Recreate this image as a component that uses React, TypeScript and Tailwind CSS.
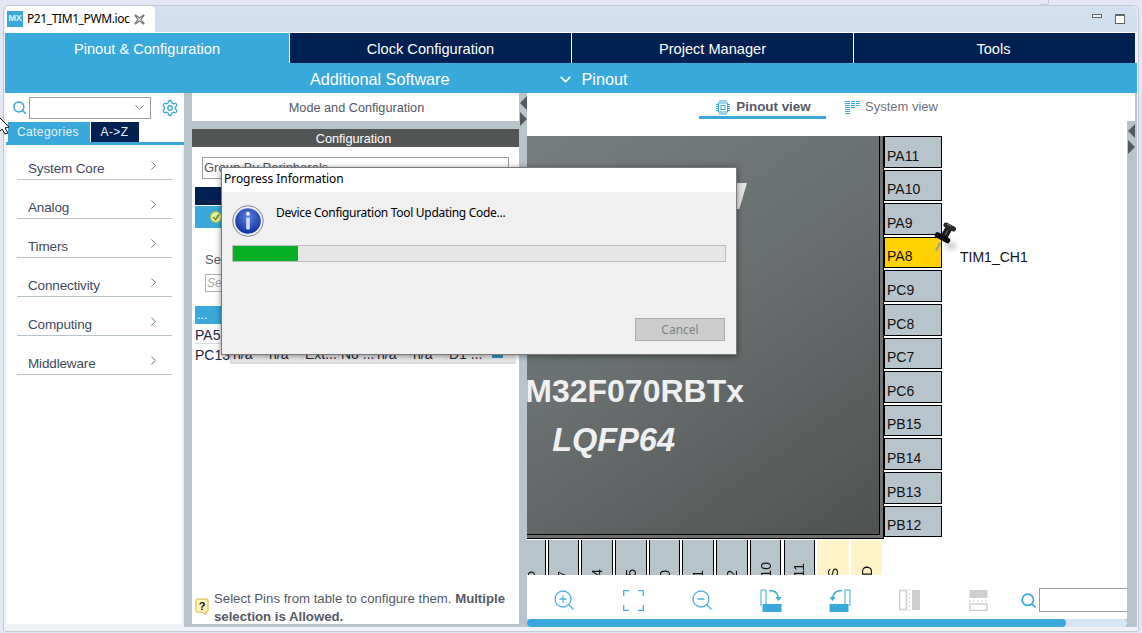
import React from "react";
import { ChevronDown, ChevronRight, Search, Settings, ZoomIn, ZoomOut } from "lucide-react";

const categories = ["System Core", "Analog", "Timers", "Connectivity", "Computing", "Middleware"];
const rightPins = ["PA11", "PA10", "PA9", "PA8", "PC9", "PC8", "PC7", "PC6", "PB15", "PB14", "PB13", "PB12"];
const bottomPins = ["PA6", "PA7", "PC4", "PC5", "PB0", "PB1", "PB2", "PB10", "PB11", "VSS", "VDD"];
const cells = ["n/a", "n/a", "Ext...", "No ...", "n/a", "n/a", "D1 ..."];

function PinIcon() {
  return (
    <svg width="34" height="40" viewBox="0 0 34 40" className="absolute left-[930px] top-[218px]">
      <defs>
        <filter id="pb" x="-80%" y="-80%" width="260%" height="260%"><feGaussianBlur stdDeviation="2.5" /></filter>
        <filter id="pb2" x="-30%" y="-30%" width="160%" height="160%"><feGaussianBlur stdDeviation="0.6" /></filter>
      </defs>
      <ellipse cx="21" cy="28" rx="6" ry="4" fill="#aaa" opacity="0.55" filter="url(#pb)" />
      <path d="M10 25 L6 33" stroke="#a5a58c" strokeWidth="2.500" />
      <g filter="url(#pb2)" fill="none" strokeLinecap="round">
        <path d="M19 10 L14 19" stroke="#1c1c1c" strokeWidth="7" />
        <path d="M16 7 L23.500 11" stroke="#2a2a2a" strokeWidth="5" />
        <path d="M7.500 17 L17.500 22.500" stroke="#111" strokeWidth="5.500" />
      </g>
      <path d="M17 6 L21 8" stroke="#8a8a8a" strokeWidth="1" />
      <path d="M18 12 L15 17" stroke="#666" strokeWidth="1.200" />
    </svg>
  );
}

function Cursor() {
  return (
    <svg width="10" height="18" viewBox="0 0 10 18" className="absolute left-0 top-[117px]">
      <path d="M-1 0 L9 10 L5 11 L8 16 L5 17 L2 12 L-1 15 Z" fill="#fff" stroke="#111" strokeWidth="1" />
    </svg>
  );
}

function InfoIcon() {
  return (
    <svg width="32" height="32" viewBox="0 0 32 32" className="shrink-0">
      <defs>
        <radialGradient id="ig" cx="50%" cy="35%" r="65%">
          <stop offset="0" stopColor="#5b82e0" />
          <stop offset="1" stopColor="#10309c" />
        </radialGradient>
      </defs>
      <circle cx="16" cy="16" r="15.3" fill="#eef0f6" stroke="#7c8494" strokeWidth="1" />
      <circle cx="16" cy="16" r="12.8" fill="url(#ig)" />
      <circle cx="16" cy="8.8" r="2" fill="#f2f4fa" />
      <rect x="14.2" y="12.5" width="3.6" height="12" rx="1.2" fill="#d9dee8" />
    </svg>
  );
}

function ChipIcon() {
  return (
    <svg width="14" height="15" viewBox="0 0 14 15" fill="none" stroke="#39a9dc" strokeWidth="1">
      <rect x="2.5" y="3" width="9" height="9" />
      <rect x="5" y="5.5" width="4" height="4" />
      <path d="M4 0v2M6 0v2M8 0v2M10 0v2M4 13v2M6 13v2M8 13v2M10 13v2M0 4.500h2M0 6.500h2M0 8.500h2M0 10.500h2M12 4.500h2M12 6.500h2M12 8.500h2M12 10.500h2" />
    </svg>
  );
}

function SystemIcon() {
  return (
    <svg width="15" height="14" viewBox="0 0 15 14" fill="none" stroke="#39a9dc" strokeWidth="1">
      <path d="M0 1.500h5M6 1.500h4M11 1.500h4M0 3.500h5M6 3.500h4M11 3.500h4M0 5.500h5M6 5.500h4M11 5.500h4M0 7.500h5M6 7.500h4M0 9.500h5M0 11.500h5M0 13.500h5" />
    </svg>
  );
}

function FrameIcon() {
  return (
    <svg width="21" height="21" viewBox="0 0 21 21" fill="none" stroke="#4bb0e0" strokeWidth="1.300">
      <path d="M0.700 6V0.700H6M15 0.700H20.300V6M20.300 15V20.300H15M6 20.300H0.700V15" />
    </svg>
  );
}

function RotateRight() {
  return (
    <svg width="22" height="23" viewBox="0 0 22 23" fill="none" stroke="#39a9dc" strokeWidth="1">
      <path d="M1 17V1H6V15" />
      <rect x="2.500" y="15" width="19" height="8" fill="#39a9dc" stroke="none" />
      <path d="M9 1.500 C14 1.500 18 4 18.500 9" strokeWidth="1.400" />
      <path d="M15.500 8 L21.500 8 L18.500 12 Z" fill="#39a9dc" stroke="none" />
    </svg>
  );
}

function RotateLeft() {
  return (
    <svg width="22" height="23" viewBox="0 0 22 23" fill="none" stroke="#39a9dc" strokeWidth="1">
      <path d="M21 17V1H16V15" />
      <rect x="0.500" y="15" width="19" height="8" fill="#39a9dc" stroke="none" />
      <path d="M13 1.500 C8 1.500 4 4 3.500 9" strokeWidth="1.400" />
      <path d="M0.500 8 L6.500 8 L3.500 12 Z" fill="#39a9dc" stroke="none" />
    </svg>
  );
}

function MirrorV() {
  return (
    <svg width="21" height="22" viewBox="0 0 21 22" fill="none" stroke="#cfcfcf">
      <rect x="0.500" y="1.500" width="7" height="19" strokeWidth="1.500" />
      <rect x="13" y="1" width="8" height="20" fill="#cfcfcf" stroke="none" />
      <path d="M10.500 0V22" strokeDasharray="2 2" strokeWidth="1" />
    </svg>
  );
}

function MirrorH() {
  return (
    <svg width="19" height="21" viewBox="0 0 19 21" fill="none" stroke="#cfcfcf">
      <rect x="0.500" y="0" width="18" height="8" fill="#cfcfcf" stroke="none" />
      <path d="M0 11H19" strokeDasharray="2 2" strokeWidth="1" />
      <rect x="1" y="14" width="17" height="6.500" strokeWidth="1.500" />
    </svg>
  );
}

function HelpIcon() {
  return (
    <svg width="14" height="18" viewBox="0 0 14 18" className="shrink-0">
      <path d="M2 1H12Q13 1 13 2V13Q13 14 12 14H11L10.500 17L7.500 14H2Q1 14 1 13V2Q1 1 2 1Z" fill="#fff3b0" stroke="#d9b44a" strokeWidth="1" />
      <text x="7" y="11.500" textAnchor="middle" fontSize="11" fontWeight="700" fill="#111" fontFamily="Liberation Sans">?</text>
    </svg>
  );
}

function Triangles() {
  return (
    <div className="flex flex-col items-center gap-[2px]">
      <div className="h-0 w-0 border-y-[7px] border-r-[7px] border-y-transparent border-r-[#54595c]" />
      <div className="h-0 w-0 border-y-[7px] border-l-[7px] border-y-transparent border-l-[#54595c]" />
    </div>
  );
}

export default function App() {
  return (
    <div className="relative h-[633px] w-[1142px] overflow-hidden bg-[#e3e7f5] pt-[5px] font-['Liberation_Sans',Arial,sans-serif] text-[14px]">
      <div className="absolute left-[1040px] top-0 h-[5px] w-[9px] rounded-br-[3px] border-b border-r border-[#c6cad4]" />
      <div className="ml-[3px] h-[627px] w-[1136px] rounded-t-[6px] rounded-b-[3px] border border-[#c5c9d2] bg-[#f0f1f6] px-px">
        {/* editor tab strip */}
        <div className="flex h-[26px] bg-[linear-gradient(#d2e0ef,#cfdeec)] rounded-tr-[6px]">
          <div className="flex h-full w-[150px] items-center rounded-t-[5px] bg-white pl-[2px] font-['Noto_Sans',sans-serif] text-[12px] text-black">
            <div className="flex h-[16px] w-[16px] items-center justify-center bg-[#39a9dc] font-['Liberation_Sans',sans-serif] text-[9px] font-bold tracking-[-0.3px] text-[#dff1fb]">MX</div>
            <span className="ml-[4px] tracking-[-0.4px]">P21_TIM1_PWM.ioc</span>
            <svg width="11" height="11" viewBox="0 0 11 11" className="ml-[5px]" fill="none" stroke="#777" strokeWidth="1.200"><path d="M1.500 1 L5.500 4 L9.500 1 L10 1.500 L7 5.500 L10 9.500 L9.500 10 L5.500 7 L1.500 10 L1 9.500 L4 5.500 L1 1.500 Z" /></svg>
          </div>
          <div className="flex flex-1 items-center justify-end pr-[12px]">
            <div className="mb-[6px] h-[4px] w-[10px] border border-[#666] bg-[#eef2f8]" />
            <div className="ml-[13px] h-[10px] w-[10px] border border-[#666] border-t-2 bg-white" />
          </div>
        </div>
        <div className="h-px bg-white" />
        {/* perspective navigation */}
        <div className="flex h-[30px] text-[14.6px] text-white">
          <div className="flex w-[285px] items-center justify-center border-r border-white bg-[#39a9dc] pt-[3px]">Pinout &amp; Configuration</div>
          <div className="flex w-[282px] items-center justify-center border-r border-white bg-[#002052] pt-[3px]">Clock Configuration</div>
          <div className="flex w-[282px] items-center justify-center border-r border-white bg-[#002052] pt-[3px]">Project Manager</div>
          <div className="flex w-[281px] items-center justify-center bg-[#002052] pr-[2px] pt-[3px]">Tools</div>
        </div>
        <div className="flex h-[30px] items-center bg-[#39a9dc] pt-[2px] text-[16.2px] text-white">
          <span className="ml-[305px]">Additional Software</span>
          <ChevronDown className="ml-[108px] h-[17px] w-[17px]" strokeWidth={2.200} />
          <span className="ml-[7px]">Pinout</span>
        </div>
        {/* body */}
        <div className="flex h-[534px] bg-[#b8c4cc]">
          {/* left column */}
          <div className="flex w-[179px] flex-col bg-[#eff1f5] pb-[3px]">
            <div className="flex h-[29px] items-center bg-white pl-[7px]">
              <Search className="h-[15px] w-[15px] text-[#39a9dc]" strokeWidth={2.400} />
              <div className="ml-[2px] flex h-[22px] w-[122px] items-center justify-end border border-[#9a9ea1] pr-[3px]">
                <ChevronDown className="h-[15px] w-[15px] text-[#777]" strokeWidth={1.500} />
              </div>
              <Settings className="ml-[10px] h-[18px] w-[18px] text-[#39a9dc]" strokeWidth={1.800} />
            </div>
            <div className="flex h-[20px] bg-white pl-[3px] text-[12px] tracking-[0.4px] text-[#e3f3fb]">
              <div className="flex w-[82px] items-center justify-center bg-[#39a9dc] pr-[2px]">Categories</div>
              <div className="ml-px flex w-[48px] items-center justify-center bg-[#002052] pr-[1px]">A-&gt;Z</div>
            </div>
            <div className="ml-px h-[3px] bg-[#39a9dc]" />
            <div className="mx-[2px] flex flex-1 flex-col gap-[15px] bg-white px-[10px] pt-[11px]">
              {categories.map((c) => (
                <div key={c} className="flex h-[24px] items-center justify-between border-b border-[#b8c4cc] pl-[11px] pr-[11px] text-[13.500px] text-[#3f4a5c]">
                  <span className="pt-[3px] tracking-[-0.15px]">{c}</span>
                  <ChevronRight className="mb-[4px] h-[15px] w-[15px] text-[#6b7075]" strokeWidth={1.500} />
                </div>
              ))}
            </div>
          </div>
          <div className="w-[8px]" />
          {/* middle column */}
          <div className="flex w-[327px] flex-col pb-[3px]">
            <div className="flex h-[28px] items-center justify-center bg-white pl-[2px] pt-[3px] text-[12.7px] text-[#555965]">Mode and Configuration</div>
            <div className="h-[8px]" />
            <div className="flex h-[18px] items-center justify-center bg-[#545655] pr-[4px] pt-[3px] text-[12.7px] text-white">Configuration</div>
            <div className="flex flex-1 flex-col bg-white">
              <div className="ml-[10px] mt-[10px] flex h-[22px] w-[307px] items-center border border-[#9a9ea1] pl-[1px] text-[13px] text-[#555]">Group By Peripherals</div>
              <div className="ml-[3px] mt-[8px] h-[18px] w-[321px] bg-[#002052]" />
              <div className="ml-[3px] mt-px flex h-[22px] w-[321px] items-center bg-[#39a9dc] pl-[15px]">
                <svg width="12" height="12" viewBox="0 0 12 12"><circle cx="6" cy="6" r="5.500" fill="#e8f2a0" stroke="#a4bd3a" /><path d="M3 6 L5.500 8.500 L9 3.500" stroke="#6f8f1b" strokeWidth="1.500" fill="none" /></svg>
              </div>
              <div className="ml-[13px] mt-[22px] text-[13px] text-[#555965]">Select Pins</div>
              <div className="ml-[13px] mt-[4px] flex h-[18px] w-[200px] items-center border border-[#b0b4b8] pl-px text-[12px] italic text-[#aaa]">Search</div>
              <div className="ml-[3px] mt-[14px] flex h-[18px] w-[321px] items-center bg-[#39a9dc] pl-[2px] text-[12px] text-white">...</div>
              <div className="ml-[3px] flex h-[20px] w-[321px] items-center border-b border-[#dcdcdc] pt-[4px] text-[14px] text-[#222a44]">PA5</div>
              <div className="ml-[3px] flex h-[20px] w-[321px] text-[14px] text-[#222a44]">
                <div className="flex w-[35px] items-center overflow-hidden whitespace-nowrap pt-[3px]">PC13</div>
                {cells.map((c, i) => (
                  <div key={i} className="flex w-[36px] items-center overflow-hidden border-b-2 border-l border-[#dcdcdc] bg-[linear-gradient(#fff,#e6e6e6)] pl-[2px] pt-[3px] whitespace-nowrap">{c}</div>
                ))}
                <div className="flex w-[34px] items-center justify-center border-b-2 border-l border-[#dcdcdc] bg-[linear-gradient(#fff,#e6e6e6)] pr-[4px]">
                  <div className="flex h-[11px] w-[11px] items-center justify-center bg-[#2f95c5]">
                    <svg width="9" height="9" viewBox="0 0 9 9" fill="none" stroke="#dff1fb" strokeWidth="1.300"><path d="M1.500 2.500 L4.500 6 L7.500 2.500" /></svg>
                  </div>
                </div>
              </div>
              <div className="flex-1" />
              <div className="-mb-[2px] flex pl-[3px] text-[13.2px] leading-[18px] text-[#555965]">
                <div className="pt-[8px]"><HelpIcon /></div>
                <div className="ml-[5px]">Select Pins from table to configure them. <b>Multiple selection is Allowed.</b></div>
              </div>
            </div>
          </div>
          <div className="flex w-[8px] justify-center pt-[3px]"><Triangles /></div>
          {/* right column */}
          <div className="flex w-[600px] flex-col">
            <div className="flex h-[43px] bg-white">
              <div className="ml-[172px] flex h-[26px] w-[127px] items-center justify-center gap-[6px] border-b-[3px] border-[#39a9dc] pl-[2px] pt-[6px] text-[13.4px] font-bold text-[#555965]">
                <ChipIcon /><span>Pinout view</span>
              </div>
              <div className="ml-[19px] flex h-[26px] items-center gap-[5px] pt-[2px] text-[13px] text-[#6f737c]">
                <SystemIcon /><span>System view</span>
              </div>
            </div>
            <div className="relative h-[439px] overflow-hidden bg-white">
              <div className="flex h-[403px]">
                <div className="h-[403px] w-[357px] border-b border-r border-black bg-[#6f7172] pb-[3px] pr-[3px]">
                  <div className="flex h-full flex-col items-end overflow-hidden border-b border-r border-black bg-[linear-gradient(145deg,#777d7f_0%,#6a6f70_45%,#4f5251_100%)] pt-[236px] font-bold text-[#eff0f1]">
                    <div className="mr-[135px] whitespace-nowrap text-[32px] leading-[38px]">STM32F070RBTx</div>
                    <div className="mr-[204px] mt-[12px] whitespace-nowrap text-[32.500px] italic leading-[36px]">LQFP64</div>
                  </div>
                </div>
                <div className="flex flex-col gap-[2px]">
                  {rightPins.map((p) => (
                    <div key={p} className="flex h-[31.6px] items-center">
                      <div className={`flex h-full w-[58px] items-end border border-black pb-[3px] pl-[2px] text-[14px] leading-[16px] text-[#111] ${p === "PA8" ? "bg-[#ffd200]" : "bg-[#b8c4cc]"}`}>{p}</div>
                      {p === "PA8" && <span className="ml-[18px] pt-[10px] text-[14px] text-[#111]">TIM1_CH1</span>}
                    </div>
                  ))}
                </div>
              </div>
              <div className="-ml-[13px] mt-px flex h-[36px] gap-[2.200px] overflow-hidden">
                {bottomPins.map((p) => {
                  const power = p === "VSS" || p === "VDD";
                  return (
                    <div key={p} className={`flex h-[62px] w-[31.500px] shrink-0 flex-col items-center justify-end pb-[6px] text-[14px] text-[#111] ${power ? "bg-[#fff4c9]" : "border-x border-black bg-[#b8c4cc]"}`}>
                      <span className="rotate-180 leading-[16px] [writing-mode:vertical-rl]">{p}</span>
                    </div>
                  );
                })}
              </div>
              <div className="absolute left-[203px] top-[47px] h-[26px] w-[17px] bg-[#e4e4e4] [clip-path:polygon(0_0,100%_0,55%_100%,0_100%)]" />
            </div>
            <div className="flex h-[44px] items-center bg-white pl-[2.500px] pt-[6px]">
              <div className="flex w-[69px] justify-center"><ZoomIn className="h-[24px] w-[24px] text-[#4bb0e0]" strokeWidth={1.300} /></div>
              <div className="flex w-[69px] justify-center"><FrameIcon /></div>
              <div className="flex w-[69px] justify-center"><ZoomOut className="h-[24px] w-[24px] text-[#4bb0e0]" strokeWidth={1.300} /></div>
              <div className="flex w-[69px] justify-center"><RotateRight /></div>
              <div className="flex w-[69px] justify-center"><RotateLeft /></div>
              <div className="flex w-[69px] justify-center"><MirrorV /></div>
              <div className="flex w-[69px] justify-center"><MirrorH /></div>
              <Search className="ml-[7px] h-[17px] w-[17px] text-[#39a9dc]" strokeWidth={2.400} />
              <div className="ml-[2px] h-[24px] flex-1 border border-r-0 border-[#9a9ea1]" />
            </div>
            <div className="h-[8px] rounded-[4px] bg-[#d6e6f4]">
              <div className="h-full w-[539px] rounded-[4px] bg-[#39a9dc]" />
            </div>
          </div>
          <div className="flex w-[8px] flex-col items-center">
            <div className="h-[28px] w-full bg-white" />
            <div className="pt-[3px]"><Triangles /></div>
          </div>
        </div>
      </div>

      <PinIcon />
      <Cursor />

      {/* modal dialog */}
      <div className="absolute left-[221px] top-[167px] flex h-[188px] w-[516px] flex-col border border-[#7a7a7a] bg-[#f0f0f0] font-['Noto_Sans',sans-serif] text-[12px] text-black shadow-[0_1px_6px_rgba(0,0,0,0.45)]">
        <div className="flex h-[24px] items-center bg-white pb-[2px] pl-[2px] tracking-[-0.05px]">Progress Information</div>
        <div className="flex pl-[10px] pt-[13px]">
          <InfoIcon />
          <div className="ml-[12px] mt-[-1px] tracking-[-0.3px]">Device Configuration Tool Updating Code...</div>
        </div>
        <div className="ml-[10px] mt-[8px] h-[17px] w-[494px] border border-[#bcbcbc] bg-[#e6e6e6]">
          <div className="h-full w-[65px] bg-[#06b025]" />
        </div>
        <div className="flex flex-1 items-end justify-end pb-[13px] pr-[11px]">
          <div className="flex h-[23px] w-[90px] items-center justify-center border border-[#adadad] bg-[#cccccc] text-[#838383]">Cancel</div>
        </div>
      </div>
    </div>
  );
}
